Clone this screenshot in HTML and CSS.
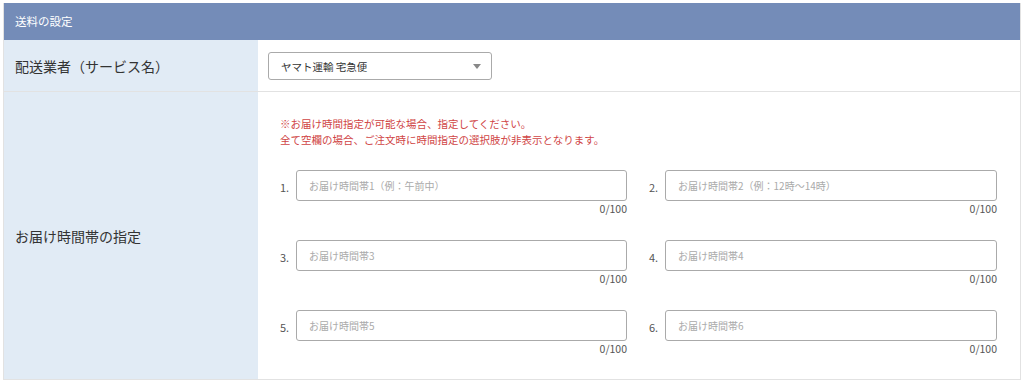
FILE: index.html
```html
<!DOCTYPE html>
<html lang="ja">
<head>
  <meta charset="UTF-8" />
  <title>送料の設定</title>
  <link rel="stylesheet" href="styles.css">
</head>
<body>
  <div class="panel">
    <div class="panel-head">送料の設定</div>

    <div class="row">
      <div class="row-label">配送業者（サービス名）</div>
      <div class="row-body row-body-select">
        <div class="select">
          <span>ヤマト運輸 宅急便</span>
          <span class="caret"></span>
        </div>
      </div>
    </div>

    <div class="row row-last">
      <div class="row-label">お届け時間帯の指定</div>
      <div class="row-body row-body-times">
        <p class="note">※お届け時間指定が可能な場合、指定してください。<br>全て空欄の場合、ご注文時に時間指定の選択肢が非表示となります。</p>
        <div class="times">
          <div class="time">
            <div class="time-line"><span class="num">1.</span><input type="text" placeholder="お届け時間帯1（例：午前中）"></div>
            <div class="count">0/100</div>
          </div>
          <div class="time">
            <div class="time-line"><span class="num">2.</span><input type="text" placeholder="お届け時間帯2（例：12時〜14時）"></div>
            <div class="count">0/100</div>
          </div>
          <div class="time">
            <div class="time-line"><span class="num">3.</span><input type="text" placeholder="お届け時間帯3"></div>
            <div class="count">0/100</div>
          </div>
          <div class="time">
            <div class="time-line"><span class="num">4.</span><input type="text" placeholder="お届け時間帯4"></div>
            <div class="count">0/100</div>
          </div>
          <div class="time">
            <div class="time-line"><span class="num">5.</span><input type="text" placeholder="お届け時間帯5"></div>
            <div class="count">0/100</div>
          </div>
          <div class="time">
            <div class="time-line"><span class="num">6.</span><input type="text" placeholder="お届け時間帯6"></div>
            <div class="count">0/100</div>
          </div>
        </div>
      </div>
    </div>
  </div>
</body>
</html>
```

FILE: styles.css
```css
:root {
  --head:   #748cb8;
  --label:  #e1ebf5;
  --line:   #e2e2e2;
  --text:   #333;
  --red:    #d04545;
  --muted:  #aaa;
}
* { box-sizing: border-box; margin: 0; padding: 0; }
body {
  margin: 3px;
  font-family: "Noto Sans CJK JP", "Noto Sans", sans-serif;
  color: var(--text);
  background: #fff;
}
.panel {
  width: 1018px;
  border: 1px solid var(--line);
  border-top: none;
}
.panel-head {
  height: 37px;
  line-height: 37px;
  padding-left: 11px;
  background: var(--head);
  color: #fff;
  font-size: 11.5px;
}
.row {
  display: flex;
  border-bottom: 1px solid var(--line);
}
.row-last { border-bottom: none; }
.row-label {
  width: 254px;
  flex: none;
  display: flex;
  align-items: center;
  padding-left: 11px;
  background: var(--label);
  font-size: 14px;
}
.row-body { flex: 1; }
.row-body-select { padding: 12px 10px 11px; }
.select {
  width: 224px;
  height: 28px;
  display: flex;
  align-items: center;
  justify-content: space-between;
  padding: 0 10px 0 12px;
  border: 1px solid #aaa;
  border-radius: 3px;
  font-size: 10.5px;
}
.caret {
  width: 0; height: 0;
  border-left: 4px solid transparent;
  border-right: 4px solid transparent;
  border-top: 5px solid #888;
}
.row-body-times { padding: 24px 22px 23px; }
.note {
  color: var(--red);
  font-size: 10.5px;
  line-height: 15.5px;
}
.times {
  display: grid;
  grid-template-columns: 347px 348px;
  column-gap: 22px;
  row-gap: 24px;
  margin-top: 23px;
}
.time-line {
  display: flex;
  align-items: center;
}
.num {
  width: 16px;
  flex: none;
  font-size: 11px;
  color: #555;
  padding-top: 3px;
}
.time input {
  flex: 1;
  min-width: 0;
  height: 31px;
  padding: 0 12px;
  border: 1px solid #aaa;
  border-radius: 3px;
  font-family: inherit;
  font-size: 10px;
  color: var(--text);
}
.time input::placeholder { color: var(--muted); }
.count {
  text-align: right;
  font-size: 10.5px;
  line-height: 15px;
  color: #555;
}
```
